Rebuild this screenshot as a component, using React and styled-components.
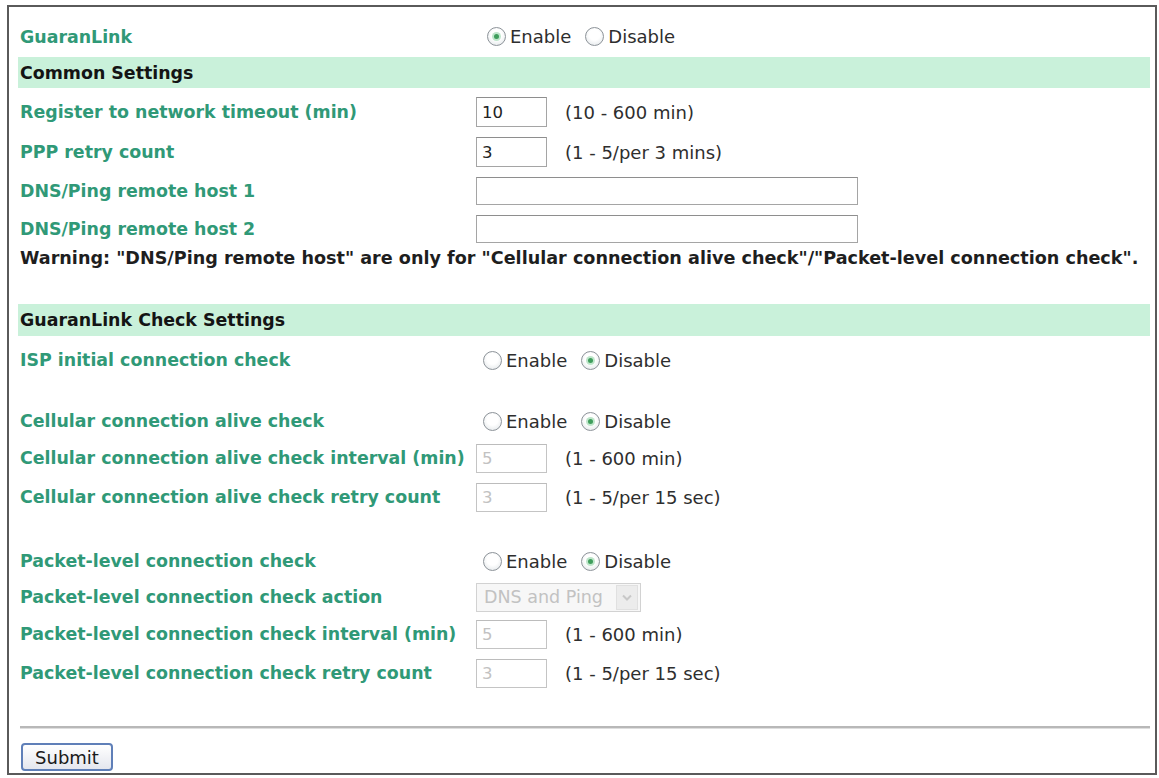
import styled, { createGlobalStyle } from "styled-components";

/*
 ** STYLED COMPONENTS
 */
const GlobalStyle = createGlobalStyle`
  html, body {
    margin: 0;
    padding: 0;
    background: #ffffff;
  }
  body {
    font-family: "DejaVu Sans", Verdana, sans-serif;
  }
`;

//Frame
const Frame = styled.div`
  box-sizing: border-box;
  width: 1150px;
  height: 770px;
  margin: 5px 0 0 7px;
  border: 2px solid #5a5a5a;
  padding: 9px 5px 3px 9px;
  display: flex;
  flex-direction: column;
`;

//Row
const Row = styled.div`
  display: grid;
  grid-template-columns: 458px 1fr;
  align-items: center;
  height: ${({ $h }) => $h}px;
  flex-shrink: 0;
`;

//Label
const Label = styled.div`
  padding-left: 2px;
  font-size: 17.4px;
  font-weight: bold;
  color: #309977;
  white-space: nowrap;
`;

//Band
const Band = styled.div`
  height: ${({ $h }) => $h}px;
  margin-bottom: 4px;
  background: #c9f1da;
  display: flex;
  align-items: center;
  padding-left: 2px;
  font-size: 17.4px;
  font-weight: bold;
  color: #141414;
  flex-shrink: 0;
`;

//Warning
const Warning = styled.div`
  height: ${({ $h }) => $h}px;
  display: flex;
  align-items: center;
  padding-left: 2px;
  font-size: 17.6px;
  font-weight: bold;
  color: #1e1e1e;
  white-space: nowrap;
  flex-shrink: 0;
`;

//Spacer
const Spacer = styled.div`
  height: ${({ $h }) => $h}px;
  flex-shrink: 0;
`;

//Value cell
const Value = styled.div`
  display: flex;
  align-items: center;
  gap: 18px;
  font-size: 18px;
  color: #2e2e2e;
  white-space: nowrap;
`;

//Radio group
const RadioGroup = styled.div`
  display: flex;
  align-items: center;
  margin-left: ${({ $indent }) => $indent}px;
  font-size: 18px;
  color: #2e2e2e;
`;

const RadioItem = styled.span`
  display: inline-flex;
  align-items: center;
  gap: 4px;
  margin-right: 14px;
`;

const Dot = styled.span`
  box-sizing: border-box;
  width: 19px;
  height: 19px;
  border-radius: 50%;
  border: 1px solid #8d9399;
  background: radial-gradient(circle at 50% 40%, #ffffff 40%, #dde2e5 100%);
  display: inline-flex;
  align-items: center;
  justify-content: center;

  &::after {
    content: "";
    width: ${({ $on }) => ($on ? "5px" : "0")};
    height: ${({ $on }) => ($on ? "5px" : "0")};
    border-radius: 50%;
    background: #3f9e5c;
    box-shadow: ${({ $on }) => ($on ? "0 0 0 2px #bfe6cb" : "none")};
  }
`;

//Text input
const Input = styled.div`
  box-sizing: border-box;
  width: ${({ $w }) => $w}px;
  height: ${({ $h }) => $h}px;
  border: 1px solid ${({ $off }) => ($off ? "#c4c4c4" : "#a5a5a5")};
  border-top-color: ${({ $off }) => ($off ? "#bcbcbc" : "#8e8e8e")};
  background: #ffffff;
  display: flex;
  align-items: center;
  padding-left: 5px;
  font-size: 16.5px;
  color: ${({ $off }) => ($off ? "#c2c2c2" : "#222222")};
`;

//Select
const Select = styled.div`
  box-sizing: border-box;
  width: 165px;
  height: 29px;
  border: 1px solid #d2d2d2;
  background: #f7f7f7;
  display: flex;
  align-items: center;
  justify-content: space-between;
  padding: 0 2px 0 7px;
  font-size: 17.5px;
  color: #c2c2c2;
`;

const Arrow = styled.span`
  width: 20px;
  height: 23px;
  background: #ececec;
  border: 1px solid #e0e0e0;
  display: flex;
  align-items: center;
  justify-content: center;
`;

//Rule
const Rule = styled.div`
  height: 2px;
  background: #b8b8b8;
  border-bottom: 1px solid #dedede;
  margin: 0 0 14px 2px;
  flex-shrink: 0;
`;

//Button
const Button = styled.button`
  box-sizing: border-box;
  width: 92px;
  height: 28px;
  margin-left: 3px;
  border: 2px solid #5f7fb8;
  border-radius: 4px;
  background: linear-gradient(#ffffff, #e4e6ee);
  font-family: "DejaVu Sans", Verdana, sans-serif;
  font-size: 18px;
  color: #1a1a1a;
  padding: 0;
`;

/*
 ** COMPONENT [App]
 */
const Radios = ({ on, indent = 7 }) => (
  <RadioGroup $indent={indent}>
    <RadioItem>
      <Dot $on={on === "enable"} />
      Enable
    </RadioItem>
    <RadioItem>
      <Dot $on={on === "disable"} />
      Disable
    </RadioItem>
  </RadioGroup>
);

const Field = ({ label, h, children }) => (
  <Row $h={h}>
    <Label>{label}</Label>
    <Value>{children}</Value>
  </Row>
);

const App = () => {
  return (
    <>
      <GlobalStyle />
      <Frame>
        <Field label="GuaranLink" h={41}>
          <Radios on="enable" indent={11} />
        </Field>
        <Band $h={31}>Common Settings</Band>
        <Field label="Register to network timeout (min)" h={40}>
          <Input $w={71} $h={30}>10</Input>
          (10 - 600 min)
        </Field>
        <Field label="PPP retry count" h={40}>
          <Input $w={71} $h={30}>3</Input>
          (1 - 5/per 3 mins)
        </Field>
        <Field label="DNS/Ping remote host 1" h={37}>
          <Input $w={382} $h={28} />
        </Field>
        <Field label="DNS/Ping remote host 2" h={40}>
          <Input $w={382} $h={28} />
        </Field>
        <Warning $h={17}>
          Warning: "DNS/Ping remote host" are only for "Cellular connection alive check"/"Packet-level connection check".
        </Warning>
        <Spacer $h={38} />
        <Band $h={32}>GuaranLink Check Settings</Band>
        <Field label="ISP initial connection check" h={40}>
          <Radios on="disable" />
        </Field>
        <Spacer $h={23} />
        <Field label="Cellular connection alive check" h={36}>
          <Radios on="disable" />
        </Field>
        <Field label="Cellular connection alive check interval (min)" h={38}>
          <Input $w={71} $h={29} $off>5</Input>
          (1 - 600 min)
        </Field>
        <Field label="Cellular connection alive check retry count" h={40}>
          <Input $w={71} $h={29} $off>3</Input>
          (1 - 5/per 15 sec)
        </Field>
        <Spacer $h={26} />
        <Field label="Packet-level connection check" h={36}>
          <Radios on="disable" />
        </Field>
        <Field label="Packet-level connection check action" h={36}>
          <Select>
            DNS and Ping
            <Arrow>
              <svg width="10" height="7" viewBox="0 0 10 7">
                <path d="M1 1.5 L5 5.5 L9 1.5" fill="none" stroke="#c8c8c8" strokeWidth="2" />
              </svg>
            </Arrow>
          </Select>
        </Field>
        <Field label="Packet-level connection check interval (min)" h={38}>
          <Input $w={71} $h={29} $off>5</Input>
          (1 - 600 min)
        </Field>
        <Field label="Packet-level connection check retry count" h={40}>
          <Input $w={71} $h={29} $off>3</Input>
          (1 - 5/per 15 sec)
        </Field>
        <Spacer $h={33} />
        <Rule />
        <div>
          <Button>Submit</Button>
        </div>
      </Frame>
    </>
  );
};

export default App;
